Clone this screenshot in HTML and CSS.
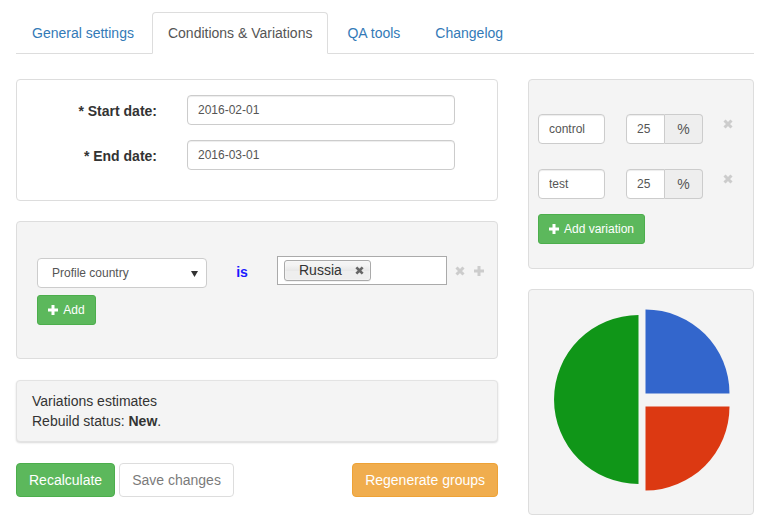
FILE: index.html
```html
<!DOCTYPE html>
<html>
<head>
<meta charset="utf-8">
<link rel="stylesheet" href="styles.css">
</head>
<body>
<div class="page">
  <ul class="tabs">
    <li><a>General settings</a></li>
    <li class="active"><a>Conditions &amp; Variations</a></li>
    <li><a>QA tools</a></li>
    <li><a>Changelog</a></li>
  </ul>
  <div class="layout">
    <div class="main">
      <div class="panel dates">
        <div class="form-row"><label>* Start date:</label><input class="field date" value="2016-02-01"></div>
        <div class="form-row"><label>* End date:</label><input class="field date" value="2016-03-01"></div>
      </div>
      <div class="panel gray conditions">
        <div class="cond-row">
          <div class="select">Profile country<svg class="caret" width="7" height="7" viewBox="0 0 7 7"><path d="M0 1 H7 L3.5 7 Z" fill="#333"/></svg></div>
          <span class="op">is</span>
          <div class="tags"><span class="tag">Russia<svg class="tag-x" width="9" height="9" viewBox="0 0 10 10"><path d="M1.5 1.5 L8.5 8.5 M8.5 1.5 L1.5 8.5" stroke="#666" stroke-width="3"/></svg></span></div>
          <svg class="icon-gray" width="10" height="10" viewBox="0 0 10 10"><path d="M1.5 1.5 L8.5 8.5 M8.5 1.5 L1.5 8.5" stroke="#ccc" stroke-width="3"/></svg>
          <svg class="icon-gray plus-gray" width="10" height="10" viewBox="0 0 10 10"><path d="M5 0 V10 M0 5 H10" stroke="#ccc" stroke-width="3"/></svg>
        </div>
        <button class="btn btn-success btn-sm add-btn"><svg class="plus" width="10" height="10" viewBox="0 0 10 10"><path d="M5 0 V10 M0 5 H10" stroke="#fff" stroke-width="3"/></svg>Add</button>
      </div>
      <div class="well">
        <div>Variations estimates</div>
        <div>Rebuild status: <b>New</b>.</div>
      </div>
      <div class="actions">
        <div class="left-actions">
          <button class="btn btn-success">Recalculate</button>
          <button class="btn btn-default disabled">Save changes</button>
        </div>
        <button class="btn btn-warning">Regenerate groups</button>
      </div>
    </div>
    <div class="side">
      <div class="panel gray variations">
        <div class="var-row">
          <input class="field name" value="control">
          <div class="input-group"><input class="field pct" value="25"><span class="addon">%</span></div>
          <svg class="var-x" width="10" height="10" viewBox="0 0 10 10"><path d="M1.5 1.5 L8.5 8.5 M8.5 1.5 L1.5 8.5" stroke="#ccc" stroke-width="3"/></svg>
        </div>
        <div class="var-row">
          <input class="field name" value="test">
          <div class="input-group"><input class="field pct" value="25"><span class="addon">%</span></div>
          <svg class="var-x" width="10" height="10" viewBox="0 0 10 10"><path d="M1.5 1.5 L8.5 8.5 M8.5 1.5 L1.5 8.5" stroke="#ccc" stroke-width="3"/></svg>
        </div>
        <button class="btn btn-success btn-sm add-var"><svg class="plus" width="10" height="10" viewBox="0 0 10 10"><path d="M5 0 V10 M0 5 H10" stroke="#fff" stroke-width="3"/></svg>Add variation</button>
      </div>
      <div class="panel gray chart">
        <svg width="224" height="224" viewBox="0 0 224 224">
          <path d="M109.5 25 A84.5 84.5 0 0 0 109.5 194 Z" fill="#109618"/>
          <path d="M116.5 103.5 L116.5 19.5 A84 84 0 0 1 200.5 103.5 Z" fill="#3366cc"/>
          <path d="M116.5 116.5 L200.5 116.5 A84 84 0 0 1 116.5 200.5 Z" fill="#dc3912"/>
        </svg>
      </div>
    </div>
  </div>
</div>
</body>
</html>
```

FILE: styles.css
```css
* { box-sizing: border-box; }
html, body { margin: 0; padding: 0; background: #fff; }
body {
  font-family: "Liberation Sans", Arial, sans-serif;
  font-size: 14px;
  line-height: 20px;
  color: #333;
}
.page { width: 738px; margin-left: 16px; padding-top: 12px; }

.tabs {
  list-style: none;
  margin: 0;
  padding: 0;
  display: flex;
  border-bottom: 1px solid #ddd;
}
.tabs li { margin-bottom: -1px; margin-right: 2px; }
.tabs a {
  display: block;
  padding: 10px 15px;
  line-height: 20px;
  border: 1px solid transparent;
  border-radius: 4px 4px 0 0;
  color: #337ab7;
}
.tabs .active a {
  color: #555;
  background: #fff;
  border-color: #ddd #ddd transparent;
}
.tabs .active { margin-right: 3px; }
.tabs li:nth-child(3) { margin-right: 3px; }

.layout { display: flex; gap: 30px; margin-top: 25px; align-items: flex-start; }
.main { width: 482px; }
.side { width: 226px; }

.panel {
  border: 1px solid #ddd;
  border-radius: 4px;
  background: #fff;
}
.panel.gray { background: #f4f4f4; }

.field {
  display: block;
  flex-shrink: 0;
  height: 30px;
  padding: 5px 10px;
  font-family: "Liberation Sans", Arial, sans-serif;
  font-size: 12px;
  color: #555;
  background: #fff;
  border: 1px solid #ccc;
  border-radius: 4px;
  box-shadow: inset 0 1px 1px rgba(0,0,0,.075);
  outline: none;
}

.dates { padding: 15px 0 15px; }
.form-row { display: flex; align-items: center; margin-bottom: 15px; }
.form-row label {
  width: 140px;
  text-align: right;
  font-weight: bold;
  margin-right: 30px;
  padding-top: 2px;
}
.date { width: 268px; }

.conditions { margin-top: 20px; padding: 34px 20px 33px; }
.cond-row { display: flex; align-items: flex-start; }
.cond-row > * { flex-shrink: 0; }
.select {
  width: 170px;
  height: 30px;
  margin-top: 2px;
  background: #fff;
  border: 1px solid #ccc;
  border-radius: 4px;
  font-size: 12px;
  color: #555;
  padding: 0 8px 0 14px;
  line-height: 28px;
  display: flex;
  justify-content: space-between;
  align-items: center;
}
.caret { margin-top: 1px; }
.op {
  width: 70px;
  text-align: center;
  font-weight: bold;
  color: #1a1aff;
  line-height: 28px;
  margin-top: 2px;
}
.tags {
  width: 170px;
  height: 29px;
  background: #fff;
  border: 1px solid #aaa;
  padding: 3px 6px;
}
.tag {
  display: inline-flex;
  align-items: center;
  height: 21px;
  border: 1px solid #aaa;
  border-radius: 3px;
  padding: 0 6px 0 14px;
  line-height: 17px;
  background: linear-gradient(#f4f4f4 20%, #e8e8e8 50%, #eee 52%, #eee);
  box-shadow: 0 0 2px #fff inset, 0 1px 0 rgba(0,0,0,.05);
  color: #333;
}
.tag-x { margin-left: 13px; }
.icon-gray { margin-top: 10px; margin-left: 8px; }
.plus-gray { margin-left: 9px; }

.btn {
  display: inline-flex;
  align-items: center;
  justify-content: center;
  white-space: nowrap;
  height: 34px;
  padding: 6px 12px;
  font-family: "Liberation Sans", Arial, sans-serif;
  font-size: 14px;
  line-height: 20px;
  border: 1px solid transparent;
  border-radius: 4px;
  cursor: pointer;
}
.btn-sm { height: 30px; padding: 5px 10px; font-size: 12px; line-height: 18px; border-radius: 3px; }
.btn-success { background: #5cb85c; border-color: #4cae4c; color: #fff; }
.btn-warning { background: #f0ad4e; border-color: #eea236; color: #fff; }
.btn-default { background: #fff; border-color: #ccc; color: #333; }
.btn.disabled { opacity: .65; }
.plus { margin-right: 5px; }
.add-btn { margin-top: 7px; width: 59px; }

.well {
  margin-top: 21px;
  padding: 10px 15px;
  background: #f4f4f4;
  border: 1px solid #e3e3e3;
  border-radius: 4px;
  box-shadow: 0 1px 2px rgba(0,0,0,.15);
}

.actions { margin-top: 21px; display: flex; justify-content: space-between; }
.left-actions { display: flex; gap: 4px; }

.variations { padding: 34px 0 24px 9px; }
.var-row { display: flex; align-items: flex-start; margin-bottom: 25px; }
.var-row > * { flex-shrink: 0; }
.var-row + .var-row { margin-bottom: 15px; }
.name { width: 67px; }
.input-group { display: flex; margin-left: 21px; }
.pct {
  width: 39px;
  border-radius: 4px 0 0 4px;
  text-align: left;
}
.addon {
  width: 38px;
  height: 30px;
  line-height: 28px;
  text-align: center;
  background: #eee;
  border: 1px solid #ccc;
  border-left: 0;
  border-radius: 0 4px 4px 0;
  font-size: 14px;
  color: #555;
}
.var-x { margin-left: 20px; margin-top: 5px; }

.chart { margin-top: 20px; height: 226px; }
.chart svg { display: block; }
```
